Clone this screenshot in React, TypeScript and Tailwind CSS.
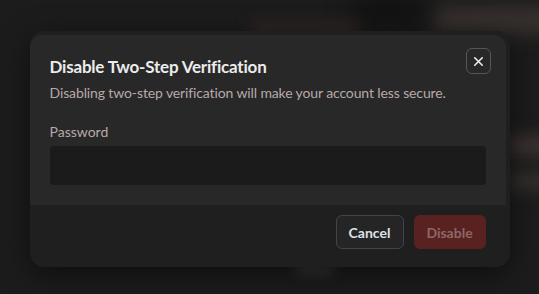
import { X } from "lucide-react";

export default function App() {
  return (
    <div className="relative w-[539px] h-[294px] overflow-hidden bg-[#1c1c1c] font-['Lato','Noto_Sans',sans-serif]">
      {/* blurred page behind the dialog */}
      <div className="absolute inset-0 pointer-events-none">
        <div className="absolute left-[430px] top-[8px] w-[140px] h-[24px] rounded-full bg-[#3b3431] blur-[10px]" />
        <div className="absolute left-[350px] top-[-10px] w-[80px] h-[40px] rounded-full bg-[#131313] blur-[12px]" />
        <div className="absolute left-[250px] top-[24px] w-[110px] h-[10px] rounded-full bg-[#3a2a26] blur-[8px]" />
        <div className="absolute left-[505px] top-[135px] w-[60px] h-[22px] rounded-full bg-[#3a3230] blur-[8px]" />
        <div className="absolute left-[505px] top-[172px] w-[60px] h-[18px] rounded-full bg-[#34302e] blur-[8px]" />
        <div className="absolute left-[295px] top-[264px] w-[40px] h-[10px] rounded-full bg-[#3a3a3a] blur-[6px]" />
      </div>

      <div className="relative flex h-full items-center justify-center pt-1">
        <div className="w-[480px] rounded-[14px] bg-[#1f1f1f] pt-1 pr-1 shadow-[0_8px_30px_rgba(0,0,0,0.5)]">
          {/* Body */}
          <div className="relative rounded-t-[12px] bg-[#282828] px-5 pt-[18px] pb-5">
            <button className="absolute right-[15px] top-[13px] flex h-[26px] w-[25px] items-center justify-center rounded-md border border-[#555] text-[#ececec]">
              <X size={15} strokeWidth={2.5} />
            </button>
            <h2 className="text-[17px] font-bold leading-[27px] tracking-[-0.2px] text-[#ececec]">Disable Two-Step Verification</h2>
            <p className="mt-[3px] text-[14px] leading-5 tracking-[-0.12px] text-[#b8a9a9]">
              Disabling two-step verification will make your account less secure.
            </p>
            <label className="mt-[19px] block text-[14px] leading-5 text-[#b8a9a9]">Password</label>
            <input
              type="password"
              className="mt-1 block h-[39px] w-full rounded bg-[#1b1b1b] px-3 text-sm text-white outline-none"
            />
          </div>

          {/* Footer */}
          <div className="flex justify-end gap-[10px] pt-[10px] pr-5 pb-[18px]">
            <button className="h-[34px] w-[68px] rounded-md border border-[#444] bg-[#252525] text-[14px] font-bold text-[#dde2ea]">
              Cancel
            </button>
            <button className="h-[34px] w-[72px] rounded-md bg-[#5a2121] text-[14px] font-bold text-[#8c6767]">
              Disable
            </button>
          </div>
        </div>
      </div>
    </div>
  );
}
